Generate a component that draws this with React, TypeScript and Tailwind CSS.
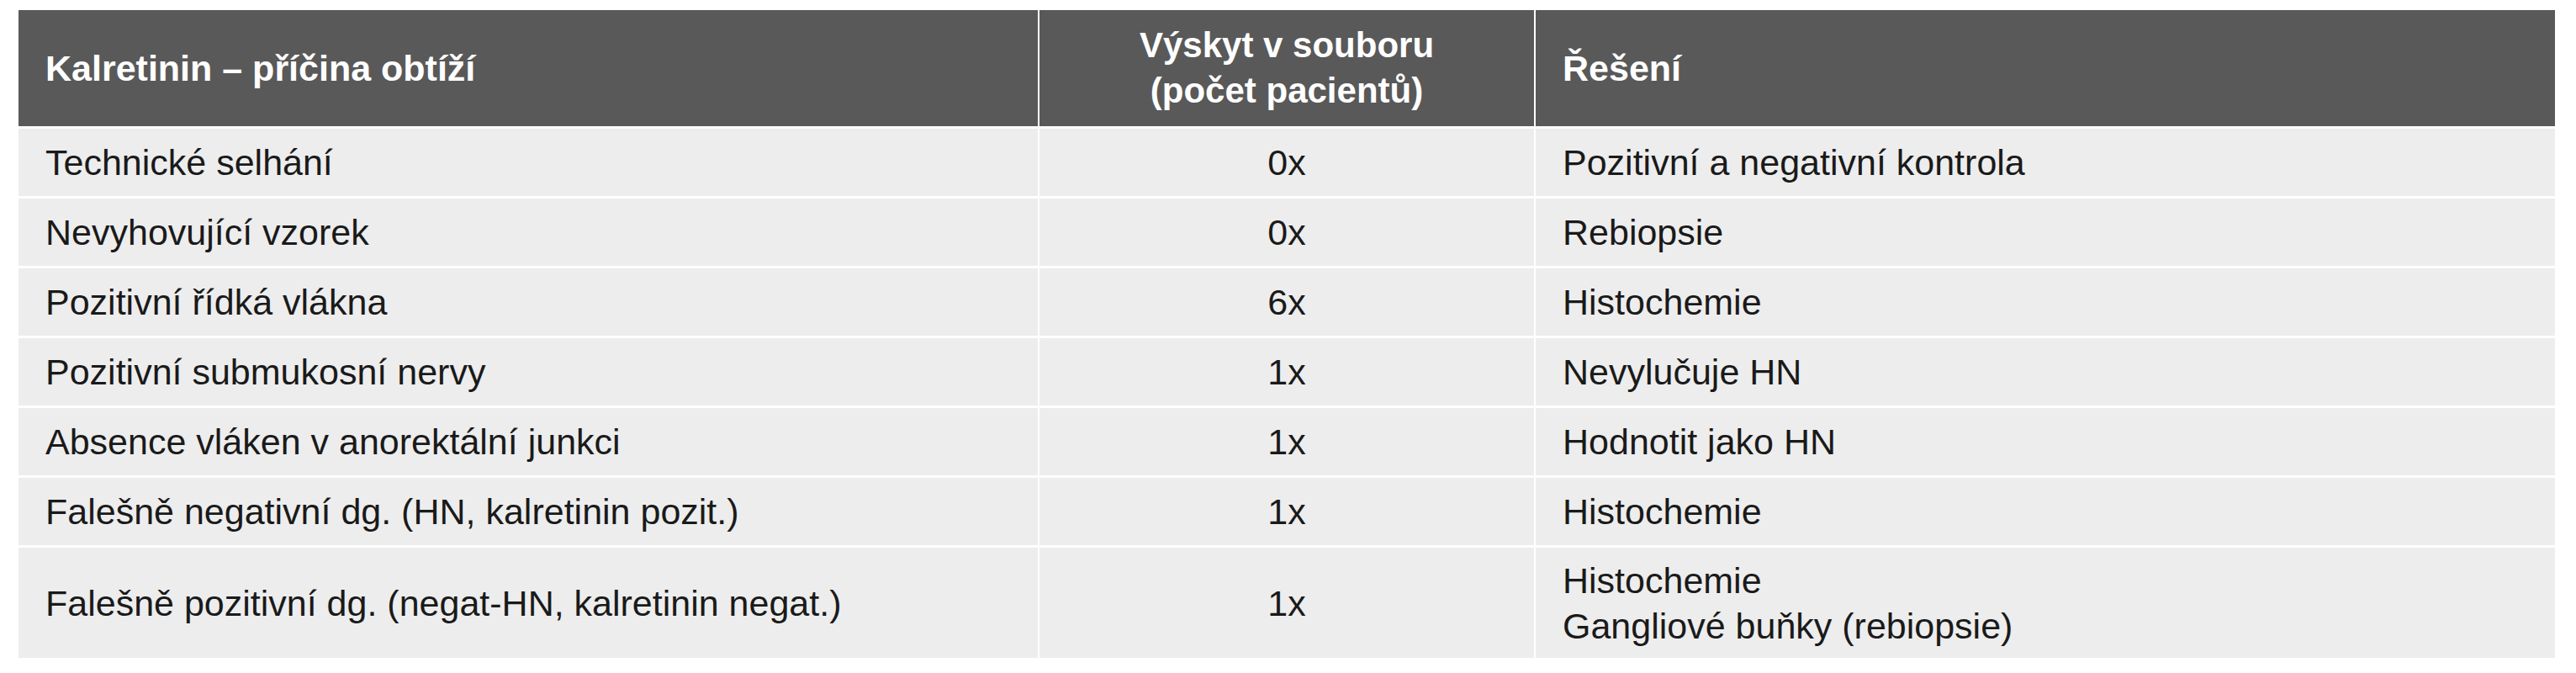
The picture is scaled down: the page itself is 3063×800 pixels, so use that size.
import React from 'react';

type Row = { cause: string; count: string; solution: string[] };

const rows: Row[] = [
    { cause: 'Technické selhání', count: '0x', solution: ['Pozitivní a negativní kontrola'] },
    { cause: 'Nevyhovující vzorek', count: '0x', solution: ['Rebiopsie'] },
    { cause: 'Pozitivní řídká vlákna', count: '6x', solution: ['Histochemie'] },
    { cause: 'Pozitivní submukosní nervy', count: '1x', solution: ['Nevylučuje HN'] },
    { cause: 'Absence vláken v anorektální junkci', count: '1x', solution: ['Hodnotit jako HN'] },
    { cause: 'Falešně negativní dg. (HN, kalretinin pozit.)', count: '1x', solution: ['Histochemie'] },
    {
        cause: 'Falešně pozitivní dg. (negat-HN, kalretinin negat.)',
        count: '1x',
        solution: ['Histochemie', 'Gangliové buňky (rebiopsie)'],
    },
];

const App: React.FC = () => {
    return (
        <div className="w-[3063px] h-[800px] bg-white pt-[12px] pl-[22px] font-['Liberation_Sans',Arial,sans-serif]">
            <div className="w-[3016px] grid grid-cols-[1212px_588px_1212px] gap-x-[2px] gap-y-[3px] bg-white text-[43px] leading-[54px]">
                {/* header */}
                <div className="bg-[#595959] h-[138px] flex items-center px-8 font-bold text-white">
                    Kalretinin – příčina obtíží
                </div>
                <div className="bg-[#595959] h-[138px] flex flex-col items-center justify-center text-center font-bold text-white text-[42px]">
                    <span>Výskyt v souboru</span>
                    <span>(počet pacientů)</span>
                </div>
                <div className="bg-[#595959] h-[138px] flex items-center px-8 font-bold text-white">
                    Řešení
                </div>

                {rows.map((row, i) => {
                    const tall = row.solution.length > 1;
                    const h = tall ? 'h-[131px]' : 'h-[80px]';
                    return (
                        <React.Fragment key={i}>
                            <div className={`bg-[#ededed] ${h} flex items-center px-8 text-[#1a1a1a]`}>
                                {row.cause}
                            </div>
                            <div className={`bg-[#ededed] ${h} flex items-center justify-center text-[#1a1a1a]`}>
                                {row.count}
                            </div>
                            <div className={`bg-[#ededed] ${h} flex flex-col justify-center px-8 text-[#1a1a1a]`}>
                                {row.solution.map((s) => (
                                    <span key={s}>{s}</span>
                                ))}
                            </div>
                        </React.Fragment>
                    );
                })}
            </div>
        </div>
    );
};

export default App;
